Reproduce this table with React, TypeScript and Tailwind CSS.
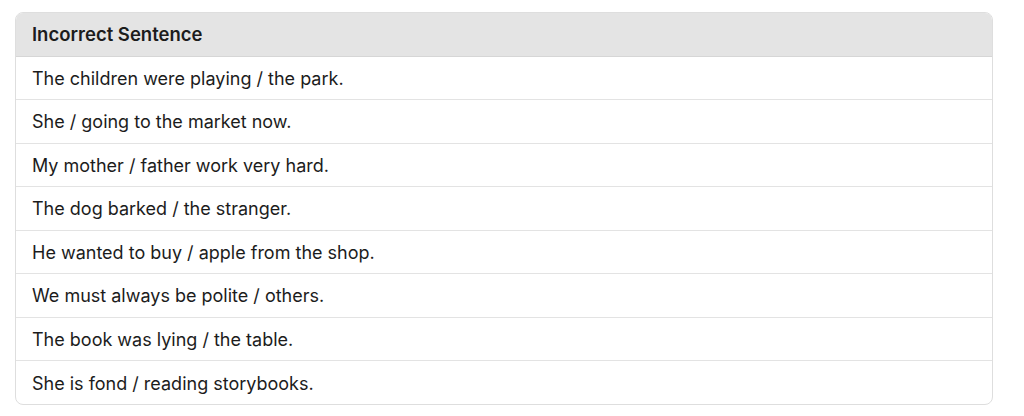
const ROWS = [
  "The children were playing / the park.",
  "She / going to the market now.",
  "My mother / father work very hard.",
  "The dog barked / the stranger.",
  "He wanted to buy / apple from the shop.",
  "We must always be polite / others.",
  "The book was lying / the table.",
  "She is fond / reading storybooks.",
];

export default function App() {
  return (
    <div className="min-h-screen bg-white pt-[12px] pl-[15px]" style={{ fontFamily: "Inter, 'Noto Sans', sans-serif" }}>
      <div className="w-[978px] overflow-hidden rounded-lg border border-[#dedede]">
        <table className="w-full border-collapse text-left text-[18px] text-[#1c1c1c]">
          <thead>
            <tr className="h-[43px] bg-[#e4e4e4] border-b border-[#d6d6d6]">
              <th className="px-4 pt-[1px] text-[18.5px] font-semibold">Incorrect Sentence</th>
            </tr>
          </thead>
          <tbody>
            {ROWS.map((row, i) => (
              <tr key={i} className="h-[43.5px] border-b border-[#e3e3e3] last:border-b-0">
                <td className="px-4 pt-[1px]">{row}</td>
              </tr>
            ))}
          </tbody>
        </table>
      </div>
    </div>
  );
}
